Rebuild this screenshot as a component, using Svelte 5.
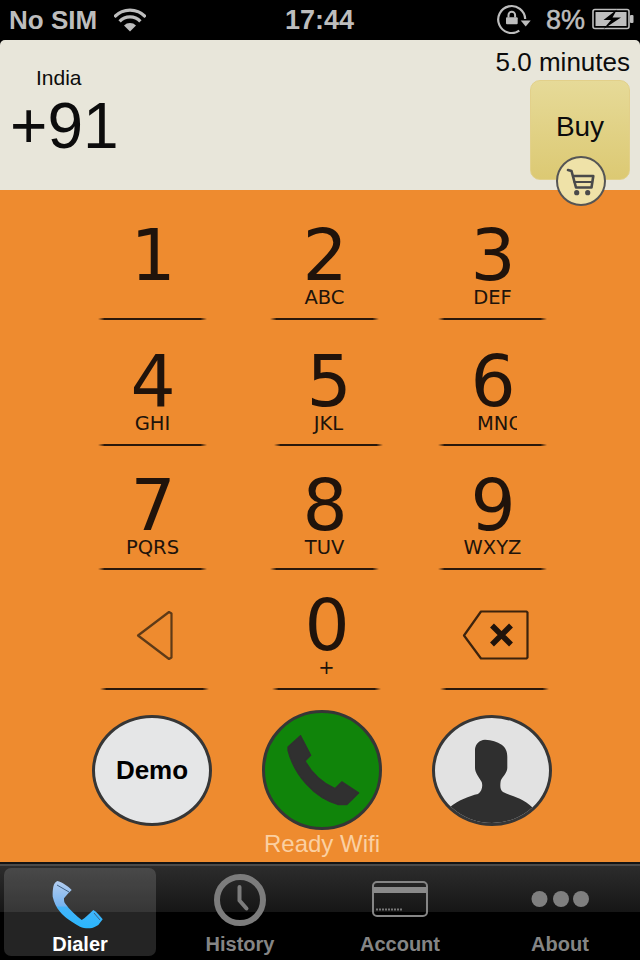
<script lang="ts">
  // Dial pad rows; the last row has icon keys and is written out below.
  const rows = [
    { cls: 'row-a', h: 'r1', keys: [{ d: '1', s: '' }, { d: '2', s: 'ABC' }, { d: '3', s: 'DEF' }] },
    { cls: 'row-b', h: 'r2', keys: [{ d: '4', s: 'GHI' }, { d: '5', s: 'JKL' }, { d: '6', s: 'MNO', clip: true }] },
    { cls: 'row-a', h: 'r3', keys: [{ d: '7', s: 'PQRS' }, { d: '8', s: 'TUV' }, { d: '9', s: 'WXYZ' }] }
  ];
</script>

<div class="app">
  <header class="status">
    <span class="carrier">No SIM</span>
    <svg class="wifi" width="32" height="24" viewBox="0 0 32 24" fill="none" stroke="#bdbdbd" stroke-width="3.2">
      <path d="M.4 9A21 21 0 0 1 31.600 9" />
      <path d="M5.600 13.400A14.200 14.200 0 0 1 26.400 13.400" />
      <path d="M16 23.500L10 17.500A8.500 8.500 0 0 1 22 17.500z" fill="#bdbdbd" stroke="none" />
    </svg>
    <span class="clock">17:44</span>
    <svg class="rotlock" width="36" height="32" viewBox="0 0 36 32" fill="none">
      <path d="M22.300 28.700A13.500 13.500 0 1 1 28.200 17" stroke="#bdbdbd" stroke-width="2.200" />
      <path d="M23.700 18.500H33.700L28.700 24.500z" fill="#bdbdbd" />
      <path d="M11.500 15.500V13a3.300 3.300 0 0 1 6.600 0v2.500" stroke="#bdbdbd" stroke-width="2" />
      <rect x="9" y="15.300" width="11.700" height="7" rx="1" fill="#bdbdbd" />
    </svg>
    <span class="pct">8%</span>
    <svg class="battery" width="42" height="22" viewBox="0 0 42 22">
      <rect x="1" y="1.500" width="36" height="19" rx="2" fill="none" stroke="#bdbdbd" stroke-width="1.600" />
      <rect x="3.500" y="4" width="31" height="14" fill="#bdbdbd" />
      <rect x="38" y="7" width="3.500" height="8" rx="1" fill="#bdbdbd" />
      <path d="M25 1.500L11.500 12h7.500L11.500 21 29 9.500h-8.500z" fill="#000" />
    </svg>
  </header>

  <section class="plan">
    <div class="dest">
      <div class="country">India</div>
      <div class="code">+91</div>
    </div>
    <div class="buy-side">
      <div class="minutes">5.0 minutes</div>
      <button class="buy">Buy</button>
    </div>
    <span class="cart">
      <svg width="32" height="32" viewBox="0 0 32 32" fill="none" stroke="#4a4a4a" stroke-width="2.600" stroke-linejoin="round" stroke-linecap="round">
        <path d="M3 5l3.500 1L11 22.500H26.500L28.300 11H8" />
        <path d="M9.500 17H27" stroke-width="2.200" />
        <circle cx="11.700" cy="27.700" r="1.300" fill="#4a4a4a" />
        <circle cx="22.700" cy="27.700" r="1.300" fill="#4a4a4a" />
      </svg>
    </span>
  </section>

  <main class="pad">
    {#each rows as row}
      <div class="row {row.cls} {row.h}">
        {#each row.keys as key}
          <div class="key">
            <span class="digit">{key.d}</span>
            <span class="sub" class:clip={key.clip}>{key.s}</span>
          </div>
        {/each}
      </div>
    {/each}

    <div class="row row-a r4">
      <div class="key">
        <svg class="key-icon" width="40" height="52" viewBox="0 0 40 52" fill="none" stroke="#5e3a17" stroke-width="2.200" stroke-linejoin="round">
          <path d="M3 26.500L34 3l2.500 1.500v44L34 50z" />
        </svg>
      </div>
      <div class="key">
        <span class="digit">0</span>
        <span class="sub">+</span>
      </div>
      <div class="key">
        <svg class="key-icon" width="68" height="52" viewBox="0 0 68 52" fill="none" stroke="#3c230d" stroke-linejoin="round">
          <path d="M3 26.500L20 2.500h45.500l1 1v45l-1 1H20z" stroke-width="2.200" />
          <path d="M31 16.500l19 19M50 16.500L31 35.500" stroke="#20130b" stroke-width="5.500" />
        </svg>
      </div>
    </div>

    <div class="actions">
      <button class="round demo">Demo</button>
      <button class="round call" aria-label="Call">
        <svg width="114" height="114" viewBox="3 3 114 114">
          <path d="M38.500 25.800L48.600 45.300 42.900 50.900C49 62 60 73 73 78.800L79.800 72 96.500 83 84.800 94.500 76.400 94.500C52 88 32 64 26.100 40.200V37z" fill="#303030" stroke="#303030" stroke-width="1.500" stroke-linejoin="round" />
        </svg>
      </button>
      <button class="round person" aria-label="Contacts">
        <svg width="114" height="105" viewBox="3 3 114 105">
          <path d="M53 24.700C60 25 65 27 69.700 29.700 74 33 75.300 37 75.300 42V53C75.300 58 70 62 68.700 66 68 71 68 75 71 77 78 81 90 82 101 93L120 120H0L18 92C27 85 37 81 46 79 50 76 51 71 49.700 67 47 62 43 58 43 53V34C43.700 29 47 25 53 24.700z" fill="#2f2f2f" />
        </svg>
      </button>
    </div>
    <div class="ready">Ready Wifi</div>
  </main>

  <nav class="tabs">
    <div class="tab active">
      <svg width="56" height="54" viewBox="0 0 56 54">
        <defs>
          <linearGradient id="blue" x1="0" y1="0" x2="0" y2="1">
            <stop offset="0" stop-color="#b3cdf0" />
            <stop offset="0.52" stop-color="#78b4f0" />
            <stop offset="0.56" stop-color="#44b4fa" />
            <stop offset="1" stop-color="#2ab6fc" />
          </linearGradient>
        </defs>
        <path d="M5.300 5C10 6 16 10 19.700 14L16.300 17.300 12 22.300C12 24 12 26 13 27.300 18 34 24 40 29.700 44 33 42 37 38 41.300 34 45 36 48 40 50.700 43.300L46.300 49C43 51 41 52 38 52.300 34 52.500 31 52 28 50.700 20 46 13 42 8 35.700 4 31 2 26 .7 20.700 .5 17 .7 14 1.300 10.700 2 8 3 6 5.300 5z" fill="url(#blue)" />
        <path d="M5 9l12 7M42 37l6 7" stroke="#3f5f80" stroke-width="1" fill="none" />
      </svg>
      <span>Dialer</span>
    </div>
    <div class="tab">
      <svg class="hist" width="54" height="54" viewBox="0 0 54 54" fill="none" stroke="#7c7c7c">
        <circle cx="27" cy="27" r="23" stroke-width="6" />
        <path d="M26.500 14v13.500l7 8" stroke-width="4" stroke-linecap="round" stroke-linejoin="round" />
      </svg>
      <span>History</span>
    </div>
    <div class="tab">
      <svg class="card" width="58" height="38" viewBox="0 0 58 38" fill="none">
        <rect x="2" y="2" width="54" height="34" rx="4" stroke="#858585" stroke-width="2" />
        <rect x="2" y="7" width="54" height="6" fill="#8a8a8a" />
        <path d="M5 29.500h26" stroke="#777" stroke-width="2" stroke-dasharray="2 1" />
      </svg>
      <span>Account</span>
    </div>
    <div class="tab">
      <svg class="dots" width="58" height="18" viewBox="0 0 58 18" fill="#7f7f7f">
        <circle cx="8.500" cy="9" r="8" />
        <circle cx="30" cy="9" r="8" />
        <circle cx="50" cy="9" r="8" />
      </svg>
      <span>About</span>
    </div>
  </nav>
</div>

<style>
  :global(body) {
    background: #000;
  }

  .app {
    width: 640px;
    height: 960px;
    display: flex;
    flex-direction: column;
    overflow: hidden;
    font-family: "Liberation Sans", Arial, sans-serif;
    background: #000;
  }

  .status {
    position: relative;
    height: 40px;
    flex: none;
    display: flex;
    align-items: center;
    color: #bdbdbd;
    font-size: 26px;
    font-weight: bold;
    line-height: 40px;
  }
  .carrier {
    margin-left: 9px;
  }
  .wifi {
    margin-left: 17px;
    margin-top: -1px;
  }
  .clock {
    position: absolute;
    left: 285px;
    font-size: 27px;
  }
  .rotlock {
    margin-left: auto;
    margin-top: -4px;
  }
  .pct {
    margin-left: 13px;
    font-size: 27px;
    font-weight: normal;
    -webkit-text-stroke: 0.5px #bdbdbd;
  }
  .battery {
    margin: 0 6px 2px 7px;
  }

  .plan {
    position: relative;
    height: 150px;
    flex: none;
    display: flex;
    justify-content: space-between;
    background: #e8e6da;
    border-radius: 5px 5px 0 0;
    color: #0c0c0c;
  }
  .dest {
    padding: 26px 0 0 10px;
  }
  .country {
    margin-left: 26px;
    font-size: 21px;
    line-height: 24px;
  }
  .code {
    margin-top: 4px;
    font-size: 64px;
    line-height: 64px;
  }
  .buy-side {
    display: flex;
    flex-direction: column;
    align-items: flex-end;
    padding: 7px 10px 0 0;
  }
  .minutes {
    font-size: 26px;
    line-height: 30px;
  }
  .buy {
    width: 100px;
    height: 100px;
    box-sizing: border-box;
    margin-top: 3px;
    padding: 0 0 7px;
    border: 1px solid #e2d08a;
    border-radius: 10px;
    background: linear-gradient(#e6da98, #dcc973);
    color: #0c0c0c;
    font: 28px "Liberation Sans", Arial, sans-serif;
  }
  .cart {
    position: absolute;
    left: 556px;
    top: 116px;
    width: 50px;
    height: 50px;
    box-sizing: border-box;
    display: flex;
    align-items: center;
    justify-content: center;
    border: 2px solid #555;
    border-radius: 50%;
    background: #efe2a8;
    z-index: 1;
  }

  .pad {
    flex: 1;
    min-height: 0;
    background: #ee8b2f;
    position: relative;
  }
  .row {
    display: flex;
    align-items: flex-end;
    padding-left: 98px;
  }
  .r1 { height: 130px; }
  .r2 { height: 126px; }
  .r3 { height: 124px; }
  .r4 { height: 120px; padding-left: 100px; }
  .row-a .key:nth-child(2) { margin-left: 63px; }
  .row-a .key:nth-child(3) { margin-left: 59px; }
  .row-b .key:nth-child(2) { margin-left: 67px; }
  .row-b .key:nth-child(3) { margin-left: 55px; }

  .key {
    position: relative;
    width: 109px;
    height: 100px;
    display: flex;
    flex-direction: column;
    align-items: center;
    color: #20130b;
    font-family: "DejaVu Sans", Verdana, sans-serif;
  }
  .key::after {
    content: "";
    position: absolute;
    left: 0;
    right: 0;
    bottom: 0;
    height: 2px;
    background: linear-gradient(90deg, #ee8b2f00, #2a180b 6%, #2a180b 94%, #ee8b2f00);
  }
  .digit {
    font-size: 71px;
    line-height: 72px;
    margin: 0 0 0 1px;
  }
  .sub {
    font-size: 19.500px;
    line-height: 22px;
    margin-top: -5px;
  }
  .sub.clip {
    width: 40px;
    overflow: hidden;
    white-space: nowrap;
    margin-left: 9px;
  }
  .key-icon {
    margin-top: 19px;
  }

  .actions {
    display: flex;
    align-items: center;
    gap: 50px;
    padding: 20px 0 0 92px;
  }
  .round {
    width: 120px;
    height: 111px;
    box-sizing: border-box;
    padding: 0;
    border: 3px solid #363636;
    border-radius: 50%;
    background: #e5e6e7;
    display: flex;
    align-items: center;
    justify-content: center;
    overflow: hidden;
    font: bold 26px "Liberation Sans", Arial, sans-serif;
    color: #000;
  }
  .call {
    height: 120px;
    background: #10840a;
  }
  .person {
    background: #e2e2e2;
  }
  .ready {
    margin: 0 0 0 4px;
    text-align: center;
    color: #fbd0a2;
    font-size: 24px;
    line-height: 28px;
  }

  .tabs {
    height: 98px;
    flex: none;
    box-sizing: border-box;
    display: grid;
    grid-template-columns: repeat(4, 1fr);
    padding-bottom: 4px;
    border-top: 2px solid #141414;
    background:
      linear-gradient(#4a4a4a, #4a4a4a) 0 0 / 100% 2px no-repeat,
      linear-gradient(#2d2d2d, #161616) 0 0 / 100% 48px no-repeat,
      #000;
  }
  .tab {
    position: relative;
    display: flex;
    flex-direction: column;
    align-items: center;
    justify-content: flex-end;
    color: #858585;
    font-size: 20px;
    font-weight: bold;
    line-height: 24px;
  }
  .tab span {
    margin-top: 2px;
  }
  .tab svg {
    position: absolute;
    left: 50%;
    top: 12px;
    transform: translateX(-50%);
  }
  .tab .hist {
    top: 9px;
  }
  .tab .card {
    top: 16px;
  }
  .tab .dots {
    top: 26px;
  }
  .active {
    margin: 4px 4px 0;
    border-radius: 7px;
    background: rgba(255, 255, 255, 0.14);
    color: #fff;
  }
  .active svg {
    top: 8px;
  }
</style>
